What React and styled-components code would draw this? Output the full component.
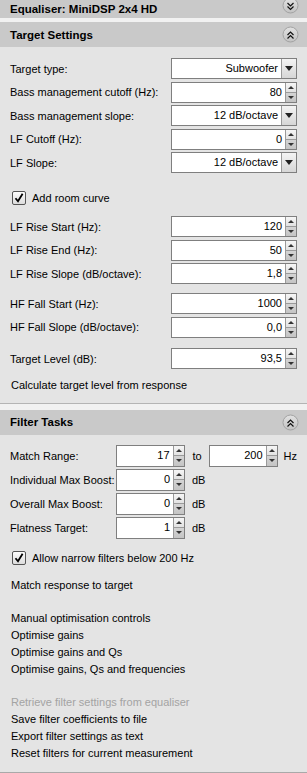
import React from 'react';
import styled, { createGlobalStyle } from 'styled-components';

const GlobalStyles = createGlobalStyle`
  * {
    box-sizing: border-box;
    margin: 0;
    padding: 0;
  }
  body {
    background-color: #e4e4e4;
    color: #000;
    font-family: "Liberation Sans", Arial, sans-serif;
    font-size: 11px;
  }
`;

const Panel = styled.div`
  width: 307px;
  height: 773px;
  background-color: #e4e4e4;
  border-bottom: 1px solid #a9a9a9;
  overflow: hidden;
`;

const Header = styled.div`
  align-items: center;
  background-color: #c9c9c9;
  display: flex;
  font-size: 11.5px;
  font-weight: bold;
  height: ${(p) => p.$h}px;
  justify-content: space-between;
  padding: 0 8px 0 10px;
`;

const ToggleIcon = styled.svg`
  flex: none;
  margin-top: ${(p) => p.$shift || 0}px;
`;

const Strip = styled.div`
  background-color: #f1f1f1;
  height: ${(p) => p.$h}px;
`;

const Body = styled.div`
  border-bottom: ${(p) => (p.$line ? '1px solid #b4b4b4' : 'none')};
  display: flex;
  flex-direction: column;
  padding: ${(p) => p.$pad};
`;

const Group = styled.div`
  display: flex;
  flex-direction: column;
  margin-top: ${(p) => p.$mt || 0}px;
`;

const Row = styled.div`
  align-items: center;
  display: grid;
  flex: none;
  grid-template-columns: 1fr 126px;
  height: 21px;
  margin-bottom: 2.5px;
`;

const FilterRow = styled.div`
  align-items: center;
  display: flex;
  flex: none;
  height: 22px;
  margin-bottom: 2px;
`;

const FilterLabel = styled.span`
  width: 106px;
`;

const Unit = styled.span`
  margin-left: ${(p) => p.$ml}px;
  margin-right: ${(p) => p.$mr || 0}px;
`;

const Box = styled.div`
  background-color: #fff;
  border: 1px solid #7f7f7f;
  display: flex;
  height: 100%;
  width: ${(p) => (p.$w ? `${p.$w}px` : '100%')};
`;

const Value = styled.div`
  flex: 1;
  line-height: 19px;
  padding-right: 3px;
  text-align: right;
`;

const DropButton = styled.div`
  align-items: center;
  background: linear-gradient(#f4f4f4, #d6d6d6);
  border-left: 1px solid #9a9a9a;
  display: flex;
  justify-content: center;
  width: 15px;
  &::after {
    border-left: 4px solid transparent;
    border-right: 4px solid transparent;
    border-top: 5px solid #222;
    content: '';
  }
`;

const Spinner = styled.div`
  border-left: 1px solid #9a9a9a;
  display: flex;
  flex-direction: column;
  width: 11px;
`;

const SpinHalf = styled.div`
  align-items: center;
  background: ${(p) => (p.$down ? 'linear-gradient(#d4d4d4, #c4c4c4)' : 'linear-gradient(#f6f6f6, #e2e2e2)')};
  border-top: ${(p) => (p.$down ? '1px solid #9a9a9a' : 'none')};
  display: flex;
  flex: 1;
  justify-content: center;
  &::after {
    border-left: 3px solid transparent;
    border-right: 3px solid transparent;
    ${(p) => (p.$down ? 'border-top: 3px solid #333;' : 'border-bottom: 3px solid #333;')}
    content: '';
  }
`;

const CheckRow = styled.label`
  align-items: center;
  display: flex;
  flex: none;
  gap: 6px;
  height: 20px;
  margin: ${(p) => p.$m};
  padding-left: 2px;
`;

const CheckBox = styled.span`
  align-items: center;
  background: linear-gradient(#fdfdfd, #dcdcdc);
  border: 1px solid #555;
  border-radius: 2px;
  display: flex;
  height: 14px;
  justify-content: center;
  width: 14px;
`;

const Link = styled.div`
  color: ${(p) => (p.$disabled ? '#a3a3a3' : '#000')};
  flex: none;
  height: 17px;
  line-height: 17px;
  margin-top: ${(p) => p.$mt || 0}px;
  padding-left: 1px;
`;

function Toggle({ up, shift }) {
  const a = up ? [9, 6] : [6, 9];
  const b = up ? [12.5, 9.5] : [9.5, 12.5];
  return (
    <ToggleIcon width="17" height="17" viewBox="0 0 17 17" $shift={shift}>
      <defs>
        <linearGradient id={`g${up ? 'u' : 'd'}`} x1="0" y1="0" x2="0" y2="1">
          <stop offset="0" stopColor="#e2e2e2" />
          <stop offset="1" stopColor="#c2c2c2" />
        </linearGradient>
      </defs>
      <circle cx="8.5" cy="8.5" r="7.5" fill={`url(#g${up ? 'u' : 'd'})`} stroke="#a2a2a2" />
      <path d={`M5.5 ${a[0]} L8.5 ${a[1]} L11.5 ${a[0]}`} fill="none" stroke="#111" strokeWidth="1.2" />
      <path d={`M5.5 ${b[0]} L8.5 ${b[1]} L11.5 ${b[0]}`} fill="none" stroke="#111" strokeWidth="1.2" />
    </ToggleIcon>
  );
}

function Field({ value, kind, w }) {
  return (
    <Box $w={w}>
      <Value>{value}</Value>
      {kind === 'select' ? (
        <DropButton />
      ) : (
        <Spinner>
          <SpinHalf />
          <SpinHalf $down />
        </Spinner>
      )}
    </Box>
  );
}

function Check({ label, m }) {
  return (
    <CheckRow $m={m}>
      <CheckBox>
        <svg width="10" height="10" viewBox="0 0 10 10">
          <path d="M1.5 5.2 L4 8.3 L8.6 0.8" fill="none" stroke="#000" strokeWidth="1.8" />
        </svg>
      </CheckBox>
      {label}
    </CheckRow>
  );
}

const typeRows = [
  ['Target type:', 'Subwoofer', 'select'],
  ['Bass management cutoff (Hz):', '80', 'spin'],
  ['Bass management slope:', '12 dB/octave', 'select'],
  ['LF Cutoff (Hz):', '0', 'spin'],
  ['LF Slope:', '12 dB/octave', 'select'],
];

const riseRows = [
  ['LF Rise Start (Hz):', '120'],
  ['LF Rise End (Hz):', '50'],
  ['LF Rise Slope (dB/octave):', '1,8'],
];

const fallRows = [
  ['HF Fall Start (Hz):', '1000'],
  ['HF Fall Slope (dB/octave):', '0,0'],
];

const boostRows = [
  ['Individual Max Boost:', '0'],
  ['Overall Max Boost:', '0'],
  ['Flatness Target:', '1'],
];

const optimise = [
  'Manual optimisation controls',
  'Optimise gains',
  'Optimise gains and Qs',
  'Optimise gains, Qs and frequencies',
];

const fileTasks = [
  ['Retrieve filter settings from equaliser', true],
  ['Save filter coefficients to file', false],
  ['Export filter settings as text', false],
  ['Reset filters for current measurement', false],
];

function Rows({ rows, mt }) {
  return (
    <Group $mt={mt}>
      {rows.map(([label, value, kind]) => (
        <Row key={label}>
          <span>{label}</span>
          <Field value={value} kind={kind} />
        </Row>
      ))}
    </Group>
  );
}

export default function App() {
  return (
    <>
      <GlobalStyles />
      <Panel>
        <Header $h={18}>
          Equaliser: MiniDSP 2x4 HD
          <Toggle shift={-8} />
        </Header>
        <Strip $h={4} />
        <Header $h={25}>
          Target Settings
          <Toggle up />
        </Header>
        <Body $line $pad="11px 10px 9px 10px">
          <Rows rows={typeRows} />
          <Check label="Add room curve" m="12px 0 8.5px 0" />
          <Rows rows={riseRows} />
          <Rows rows={fallRows} mt={6.5} />
          <Rows rows={[['Target Level (dB):', '93,5']]} mt={8} />
          <Link $mt={5}>Calculate target level from response</Link>
        </Body>
        <Strip $h={6} />
        <Header $h={25}>
          Filter Tasks
          <Toggle up />
        </Header>
        <Body $pad="10px 10px 0 10px">
          <FilterRow>
            <FilterLabel>Match Range:</FilterLabel>
            <Field value="17" w={69} />
            <Unit $ml={8} $mr={7}>to</Unit>
            <Field value="200" w={69} />
            <Unit $ml={6}>Hz</Unit>
          </FilterRow>
          {boostRows.map(([label, value]) => (
            <FilterRow key={label}>
              <FilterLabel>{label}</FilterLabel>
              <Field value={value} w={69} />
              <Unit $ml={7}>dB</Unit>
            </FilterRow>
          ))}
          <Check label="Allow narrow filters below 200 Hz" m="7px 0 0 0" />
          <Link $mt={9}>Match response to target</Link>
          <Group $mt={16.5}>
            {optimise.map((t) => (
              <Link key={t}>{t}</Link>
            ))}
          </Group>
          <Group $mt={16}>
            {fileTasks.map(([t, off]) => (
              <Link key={t} $disabled={off}>{t}</Link>
            ))}
          </Group>
        </Body>
      </Panel>
    </>
  );
}
